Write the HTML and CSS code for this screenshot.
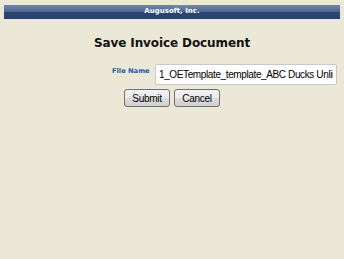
FILE: index.html
```html
<!DOCTYPE html>
<html lang="en">
  <head>
    <meta charset="UTF-8" />
    <title>Save Invoice Document</title>
    <link rel="stylesheet" href="styles.css">
  </head>
  <body>
    <div class="header">Augusoft, Inc.</div>

    <h1>Save Invoice Document</h1>

    <form class="save-form">
      <div class="form-row">
        <label for="file-name">File Name</label>
        <input type="text" id="file-name" value="1_OETemplate_template_ABC Ducks Unlimited" />
      </div>
      <div class="form-buttons">
        <button type="button">Submit</button>
        <button type="button">Cancel</button>
      </div>
    </form>
  </body>
</html>
```

FILE: styles.css
```css
body {
  margin: 0;
  padding: 5px 4px;
  background: #ebe8d8;
  font-family: "DejaVu Sans", Verdana, sans-serif;
}

.header {
  height: 14px;
  line-height: 13px;
  background: linear-gradient(#7188ae, #4e6791 50%, #2c4470 50%, #2a416b);
  color: #fff;
  font-size: 7px;
  font-weight: bold;
  text-align: center;
}

h1 {
  margin: 17px 0 0;
  font-size: 12px;
  letter-spacing: -0.1px;
  text-align: center;
  color: #111;
}

.form-row {
  display: flex;
  align-items: flex-start;
  margin-top: 14px;
  padding-left: 108px;
}

.form-row label {
  width: 43px;
  margin-top: 3px;
  font-size: 6.7px;
  font-weight: bold;
  color: #1b5b9b;
}

.form-row input {
  width: 182px;
  height: 21px;
  box-sizing: border-box;
  padding: 1px 3px;
  border: 1px solid #c8c8c8;
  border-radius: 2px;
  background: #fff;
  font-family: "Liberation Sans", Arial, sans-serif;
  font-size: 10px;
  letter-spacing: -0.38px;
  color: #000;
}

.form-buttons {
  display: flex;
  gap: 4px;
  margin-top: 4px;
  padding-left: 120px;
}

.form-buttons button {
  width: 46px;
  height: 18px;
  padding: 0;
  border: 1px solid #707070;
  border-radius: 3px;
  background: linear-gradient(#f2f2f2, #ebebeb 50%, #dddddd 50%, #cfcfcf);
  font-family: "Liberation Sans", Arial, sans-serif;
  font-size: 10px;
  letter-spacing: -0.3px;
  color: #000;
}
```
